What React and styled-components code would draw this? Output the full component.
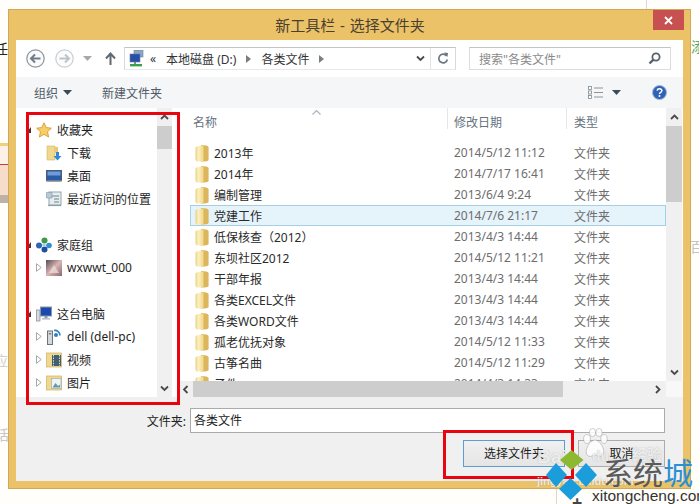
import React from "react";
import styled, { createGlobalStyle } from "styled-components";

const GlobalStyle = createGlobalStyle`
  * { box-sizing: border-box; }
  body {
    margin: 0;
    font-family: "Noto Sans", "Noto Sans CJK SC", sans-serif;
    font-size: 12px;
  }
`;

const Page = styled.div`
  position: relative;
  width: 699px;
  height: 504px;
  padding: 9px 0 0 8px;
  background: #fffefb;
  overflow: hidden;
`;

// bits of the page behind the dialog
const Scrap = styled.span`
  position: absolute;
  left: ${(p) => p.$x}px;
  top: ${(p) => p.$y}px;
  font-size: ${(p) => p.$size || 14}px;
  line-height: 1;
  font-weight: ${(p) => (p.$bold ? 700 : 400)};
  color: ${(p) => p.$color || "#222"};
`;

const LeftBand = styled.div`
  position: absolute;
  left: 0;
  top: 143px;
  width: 8px;
  height: 60px;
  background: linear-gradient(#f2cf7d 0 3px, #fdf0e4 3px 21px, #c43b3b 21px 22px, #f5dccb 22px 52px, #bdb3a5 52px);
`;

const BackLine = styled.div`
  position: absolute;
  left: ${(p) => p.$x}px;
  top: ${(p) => p.$y}px;
  width: 1px;
  height: ${(p) => p.$h}px;
  background: #d8d8d8;
`;

const Window = styled.div`
  position: relative;
  width: 683px;
  height: 480px;
  padding: 0 7px 7px;
  background: #ebc267;
  border: 1px solid #cfa95a;
  display: flex;
  flex-direction: column;
`;

const TitleBar = styled.div`
  height: 30px;
  display: grid;
  grid-template-columns: 31px 1fr 31px;
  margin-right: -1px;
`;

const Title = styled.div`
  grid-column: 2;
  text-align: center;
  font-size: 15px;
  line-height: 30px;
  word-spacing: 1px;
  color: #4a4030;
`;

const CloseButton = styled.div`
  height: 20px;
  background: #c75050;
  color: #fff;
  display: flex;
  align-items: center;
  justify-content: center;
`;

const Client = styled.div`
  flex: 1;
  display: flex;
  flex-direction: column;
  background: #f0f0f0;
  min-height: 0;
`;

const NavBar = styled.div`
  height: 37px;
  background: #fff;
  display: flex;
  align-items: center;
  padding: 0 12px 0 10px;
`;

const NavIcon = styled.div`
  width: ${(p) => p.$w}px;
  margin: 0 ${(p) => p.$mr || 0}px 0 ${(p) => p.$ml || 0}px;
  display: flex;
  justify-content: center;
`;

const AddressBar = styled.div`
  width: 332px;
  height: 23px;
  margin-right: 13px;
  display: flex;
  align-items: center;
  padding-left: 4px;
  border: 1px solid #d9d9d9;
  border-top-color: #c4c4c4;
  border-bottom-color: #e8e8e8;
  color: #333;
`;

const Crumb = styled.span`
  margin: 0 ${(p) => p.$mr || 0}px 0 ${(p) => p.$ml || 0}px;
  white-space: nowrap;
`;

const AddressEnd = styled.div`
  margin-left: auto;
  height: 100%;
  display: flex;
  align-items: center;
`;

const RefreshBox = styled.div`
  width: 25px;
  height: 100%;
  display: flex;
  align-items: center;
  justify-content: center;
  border-left: 1px solid #e3e3e3;
  margin-left: 5px;
`;

const SearchBox = styled.div`
  width: 202px;
  height: 23px;
  display: flex;
  align-items: center;
  justify-content: space-between;
  padding: 0 9px;
  border: 1px solid #dcdcdc;
  border-top-color: #c4c4c4;
  color: #8a8a8a;
`;

const Toolbar = styled.div`
  height: 31px;
  display: flex;
  align-items: center;
  padding: 0 16px 0 18px;
  background: #f5f6f7;
  color: #4f5b68;
`;

const ToolLabel = styled.span`
  margin: 0 ${(p) => p.$mr || 0}px 0 ${(p) => p.$ml || 0}px;
`;

const ToolSpacer = styled.div`
  flex: 1;
`;

const Main = styled.div`
  height: 289px;
  display: flex;
  background: #fff;
`;

const TreePane = styled.div`
  width: 141px;
  padding-top: 10px;
  overflow: hidden;
`;

const TreeRow = styled.div`
  height: 23px;
  display: flex;
  align-items: center;
  padding-left: ${(p) => (p.$level ? 20 : 10)}px;
  color: #1e1e1e;
  white-space: nowrap;
`;

const Expander = styled.div`
  width: 10px;
  height: 100%;
  display: flex;
  align-items: center;
`;

const TreeIcon = styled.div`
  width: 16px;
  height: 16px;
  margin-right: 5px;
`;

const VScroll = styled.div`
  width: ${(p) => p.$w}px;
  margin-right: ${(p) => p.$mr || 0}px;
  background: #f0f0f0;
  display: flex;
  flex-direction: column;
  align-items: center;
`;

const ArrowBox = styled.div`
  height: 18px;
  width: 100%;
  display: flex;
  align-items: center;
  justify-content: center;
  flex: none;
`;

const VThumb = styled.div`
  width: 100%;
  height: ${(p) => p.$h}px;
  background: #cdcdcd;
  flex: none;
`;

const VFill = styled.div`
  flex: 1;
`;

const Splitter = styled.div`
  width: 8px;
`;

const ListPane = styled.div`
  width: 503px;
  display: flex;
  flex-direction: column;
`;

const ListTop = styled.div`
  flex: 1;
  min-height: 0;
  display: flex;
`;

const Rows = styled.div`
  flex: 1;
  margin-left: 10px;
  overflow: hidden;
`;

const columns = "258px 119px 99px";

const Header = styled.div`
  position: relative;
  height: 34px;
  display: grid;
  grid-template-columns: ${columns};
  color: #66727e;
`;

const HeadCell = styled.div`
  height: 21px;
  padding: 6px 0 0 ${(p) => p.$pl}px;
  border-right: ${(p) => (p.$line ? "1px solid #e6e6e6" : "0")};
  line-height: 18px;
`;

const SortMark = styled.div`
  position: absolute;
  left: 122px;
  top: 2px;
  line-height: 0;
`;

const Row = styled.div`
  height: 21px;
  display: grid;
  grid-template-columns: ${columns};
  align-items: center;
  color: #6d6d6d;
  background: ${(p) => (p.$selected ? "#e5f3fb" : "transparent")};
  box-shadow: ${(p) => (p.$selected ? "inset 0 0 0 1px #a5cfe3" : "none")};
`;

const NameCell = styled.div`
  display: flex;
  align-items: center;
  gap: 5px;
  padding-left: 5px;
  color: #2a2a2a;
  white-space: nowrap;
`;

const DateCell = styled.div`
  padding-left: 6px;
  white-space: nowrap;
`;

const TypeCell = styled.div`
  padding-left: 7px;
`;

const HScrollRow = styled.div`
  height: 16px;
  display: flex;
`;

const HScroll = styled.div`
  flex: 1;
  display: flex;
  align-items: stretch;
  background: #f0f0f0;
`;

const HArrow = styled.div`
  width: 13px;
  display: flex;
  align-items: center;
  justify-content: center;
`;

const HThumb = styled.div`
  width: 370px;
  background: #cdcdcd;
`;

const HFill = styled.div`
  flex: 1;
  display: flex;
  align-items: center;
  justify-content: flex-end;
  padding-right: 4px;
`;

const Corner = styled.div`
  width: 17px;
  background: #f8f8f8;
`;

const Footer = styled.div`
  flex: 1;
  padding: 11px 18px 0 0;
  display: flex;
  flex-direction: column;
  gap: 7px;
`;

const FieldRow = styled.div`
  display: flex;
  align-items: center;
  justify-content: flex-end;
  gap: 4px;
  color: #222;
`;

const FolderInput = styled.div`
  width: 475px;
  height: 25px;
  padding: 0 3px;
  line-height: 23px;
  background: #fff;
  border: 1px solid #ababab;
  color: #222;
`;

const ButtonRow = styled.div`
  display: flex;
  justify-content: flex-end;
  gap: 13px;
`;

const Button = styled.div`
  width: ${(p) => p.$w}px;
  height: 27px;
  line-height: 25px;
  text-align: center;
  color: #222;
  background: linear-gradient(#f0f0f0, #e5e5e5);
  border: 1px solid ${(p) => (p.$primary ? "#5b9ed6" : "#acacac")};
`;

const RedBox = styled.div`
  position: absolute;
  left: ${(p) => p.$x}px;
  top: ${(p) => p.$y}px;
  width: ${(p) => p.$w}px;
  height: ${(p) => p.$h}px;
  border: 3px solid #e8050f;
`;

const LogoMark = styled.svg`
  position: absolute;
  left: 544px;
  top: 448px;
`;

const PawMark = styled.svg`
  position: absolute;
  left: 582px;
  top: 428px;
`;

const FaintMark = styled.span`
  position: absolute;
  left: ${(p) => p.$x}px;
  top: ${(p) => p.$y}px;
  font-family: "Liberation Sans", "Noto Sans CJK SC", sans-serif;
  font-size: ${(p) => p.$size}px;
  font-weight: 700;
  line-height: 1;
  color: rgba(255, 255, 255, 0.8);
  text-shadow: 0 0 1px rgba(110, 110, 110, 0.55);
  white-space: nowrap;
`;

const BrandName = styled.div`
  position: absolute;
  left: 603px;
  top: 456px;
  font-family: "Noto Sans CJK SC", sans-serif;
  font-size: 30px;
  line-height: 30px;
  color: #5a5a5a;
  white-space: nowrap;
`;

const BrandAccent = styled.span`
  color: #2b8fd2;
`;

const BrandUrl = styled.div`
  position: absolute;
  left: 592px;
  top: 487px;
  font-family: "Liberation Sans", sans-serif;
  font-size: 15.5px;
  line-height: 17px;
  color: #333;
  white-space: nowrap;
`;

const Chevron = ({ dir = "up" }) => {
  const d = {
    up: "M1 5 L4.5 1.5 L8 5",
    down: "M1 1.5 L4.5 5 L8 1.5",
    left: "M5.5 1 L2 4.5 L5.5 8",
    right: "M3 1 L6.5 4.5 L3 8",
  }[dir];
  const vertical = dir === "up" || dir === "down";
  return (
    <svg width="9" height={vertical ? 7 : 9} viewBox={vertical ? "0 0 9 7" : "0 0 9 9"}>
      <path d={d} fill="none" stroke="#4a4a4a" strokeWidth="1.8" />
    </svg>
  );
};

const Caret = ({ color = "#3c4a5a" }) => (
  <svg width="9" height="5" viewBox="0 0 9 5">
    <path d="M0 0 H9 L4.5 5 Z" fill={color} />
  </svg>
);

const CrumbArrow = () => (
  <svg width="5" height="8" viewBox="0 0 5 8">
    <path d="M0 0 L5 4 L0 8 Z" fill="#7d7d7d" />
  </svg>
);

const RoundArrow = ({ dir, faded }) => (
  <svg width="19" height="19" viewBox="0 0 19 19" opacity={faded ? 0.45 : 1}>
    <circle cx="9.5" cy="9.5" r="8.7" fill="#fafafa" stroke="#8b939b" strokeWidth="1.2" />
    <path
      d={dir === "left" ? "M14.5 9.5 H5.5 M9 5.5 L5 9.5 L9 13.5" : "M4.5 9.5 H13.5 M10 5.5 L14 9.5 L10 13.5"}
      fill="none"
      stroke="#6f7c89"
      strokeWidth="2"
    />
  </svg>
);

const UpArrow = () => (
  <svg width="11" height="13" viewBox="0 0 11 13">
    <path d="M5.5 13 V2 M1 6.5 L5.5 1.5 L10 6.5" fill="none" stroke="#5f6973" strokeWidth="2" />
  </svg>
);

const NetworkIcon = () => (
  <svg width="15" height="17" viewBox="0 0 15 17">
    <rect x="5" y="0" width="9" height="7" fill="#8ea6c4" stroke="#6b7f99" strokeWidth="0.6" />
    <rect x="1" y="4" width="10" height="8" fill="#2450a8" stroke="#6b7f99" strokeWidth="0.6" />
    <rect x="5" y="12" width="2" height="2" fill="#888" />
    <rect x="1" y="14" width="12" height="2.4" fill="#3aa24a" />
  </svg>
);

const RefreshIcon = () => (
  <svg width="12" height="13" viewBox="0 0 12 13">
    <path d="M9.6 4 A4.3 4.3 0 1 0 10.3 7.5" fill="none" stroke="#6a7683" strokeWidth="1.7" />
    <path d="M7 0.5 L11 1 L10.4 5 Z" fill="#6a7683" />
  </svg>
);

const SearchIcon = () => (
  <svg width="13" height="13" viewBox="0 0 13 13">
    <circle cx="8" cy="5" r="3.6" fill="none" stroke="#59636d" strokeWidth="1.8" />
    <path d="M5.4 7.6 L1.5 11.5" stroke="#59636d" strokeWidth="2.4" />
  </svg>
);

const ViewIcon = () => (
  <svg width="15" height="13" viewBox="0 0 15 13">
    <g fill="#fff" stroke="#7e8791" strokeWidth="0.8">
      <rect x="0.5" y="0.5" width="3" height="3" />
      <rect x="0.5" y="5" width="3" height="3" />
      <rect x="0.5" y="9.5" width="3" height="3" />
    </g>
    <path d="M6 2 H15 M6 6.5 H15 M6 11 H15" stroke="#8b949d" strokeWidth="1" />
  </svg>
);

const HelpIcon = () => (
  <svg width="15" height="15" viewBox="0 0 15 15">
    <circle cx="7.5" cy="7.5" r="7" fill="#2f62b4" stroke="#9db6da" strokeWidth="1" />
    <path d="M5.2 5.6 C5.4 3.2 10 3.2 9.9 5.7 C9.8 7.3 7.6 7.3 7.5 9" fill="none" stroke="#fff" strokeWidth="1.5" />
    <circle cx="7.5" cy="11" r="1" fill="#fff" />
  </svg>
);

const SolidExpander = () => (
  <svg width="5" height="6" viewBox="0 0 5 6">
    <path d="M5 0 V6 H0 Z" fill="#3a3a3a" />
  </svg>
);

const OpenExpander = () => (
  <svg width="6" height="9" viewBox="0 0 6 9">
    <path d="M0.5 0.7 L5.2 4.5 L0.5 8.3 Z" fill="#fff" stroke="#a6a6a6" />
  </svg>
);

const FolderIcon = () => (
  <svg width="14" height="18" viewBox="0 0 14 18">
    <defs>
      <linearGradient id="folderFace" x1="0" y1="0" x2="1" y2="0">
        <stop offset="0" stopColor="#e9cf82" />
        <stop offset="0.35" stopColor="#fbf0bf" />
        <stop offset="1" stopColor="#f0d788" />
      </linearGradient>
    </defs>
    <path d="M6 1 Q13 1 13.6 3 V16 Q13 17.5 6 17.5 Z" fill="#dcb65c" />
    <path d="M0.5 4 Q0.5 2.2 2.5 2.2 L8.5 1.5 V17.5 H2.5 Q0.5 17.5 0.5 15.5 Z" fill="url(#folderFace)" />
  </svg>
);

const StarIcon = () => (
  <svg width="16" height="16" viewBox="0 0 16 16">
    <path
      d="M8 0.8 L10.2 5.6 L15.4 6.2 L11.5 9.7 L12.6 15 L8 12.3 L3.4 15 L4.5 9.7 L0.6 6.2 L5.8 5.6 Z"
      fill="#f7ce66"
      stroke="#d99a2e"
      strokeWidth="0.9"
    />
  </svg>
);

const DownloadIcon = () => (
  <svg width="16" height="16" viewBox="0 0 16 16">
    <path d="M1 1 H9 V15 H1 Z" fill="#f0d98c" stroke="#d2b565" strokeWidth="0.6" />
    <path d="M9 2 H12 V8 H9 Z" fill="#e6c878" />
    <path d="M10 7 H13 V11 H15.5 L11.5 15.5 L7.5 11 H10 Z" fill="#2f8ad6" />
  </svg>
);

const DesktopIcon = () => (
  <svg width="16" height="16" viewBox="0 0 16 16">
    <rect x="0.5" y="2.5" width="15" height="10" fill="#2b5aa6" stroke="#4a5a70" />
    <rect x="1.5" y="3.5" width="13" height="4" fill="#6f9bd8" />
    <rect x="0.5" y="12.5" width="15" height="1.5" fill="#9aa4b0" />
  </svg>
);

const RecentIcon = () => (
  <svg width="16" height="16" viewBox="0 0 16 16">
    <rect x="3" y="1" width="12" height="13" fill="#e6edf0" stroke="#93a4ad" />
    <path d="M0.5 1.5 H6 V7 H0.5 Z" fill="#b8cbd4" stroke="#7f98a5" strokeWidth="0.6" />
    <path d="M6 5 H13 M8 8 H13 M8 11 H13" stroke="#6f8590" strokeWidth="1.2" />
    <path d="M2 14.5 H15" stroke="#8aa0ab" strokeWidth="1.2" />
  </svg>
);

const HomeGroupIcon = () => (
  <svg width="16" height="16" viewBox="0 0 16 16">
    <circle cx="8.5" cy="3.6" r="3" fill="#3f9a46" />
    <circle cx="3" cy="8.5" r="3" fill="#2f63b4" />
    <circle cx="13" cy="8.5" r="2.8" fill="#2f8fd0" />
    <circle cx="8.5" cy="12.5" r="3" fill="#1e4f9e" />
    <circle cx="8" cy="8" r="1.8" fill="#a8c9e8" />
  </svg>
);

const ThumbIcon = () => (
  <svg width="16" height="16" viewBox="0 0 16 16">
    <defs>
      <linearGradient id="thumbFill" x1="0" y1="0" x2="1" y2="1">
        <stop offset="0" stopColor="#5b4a52" />
        <stop offset="0.5" stopColor="#d8b6b4" />
        <stop offset="1" stopColor="#8c6670" />
      </linearGradient>
    </defs>
    <rect width="16" height="16" fill="url(#thumbFill)" />
    <path d="M3 13 L8 5 L13 13 Z" fill="#efe0dc" opacity="0.7" />
  </svg>
);

const ComputerIcon = () => (
  <svg width="16" height="16" viewBox="0 0 16 16">
    <rect x="0.5" y="4" width="3.5" height="11" fill="#d5dbe0" stroke="#7d8891" strokeWidth="0.7" />
    <rect x="4.5" y="1" width="11" height="9" fill="#1c49b0" stroke="#8c97a3" />
    <rect x="8.5" y="10" width="3" height="2" fill="#8c97a3" />
    <rect x="6" y="12" width="8" height="1.6" fill="#b9c2ca" />
  </svg>
);

const NetworkPcIcon = () => (
  <svg width="16" height="16" viewBox="0 0 16 16">
    <rect x="1.5" y="2" width="5" height="13.5" fill="#d4d9dd" stroke="#6c7379" />
    <rect x="2.8" y="4" width="2.4" height="1.4" fill="#70787f" />
    <path d="M8 1.5 A5 5 0 0 1 14 6.5" fill="none" stroke="#2e7fc4" strokeWidth="1.6" />
    <circle cx="10" cy="6" r="2" fill="#2e7fc4" />
  </svg>
);

const VideoIcon = () => (
  <svg width="16" height="16" viewBox="0 0 16 16">
    <rect x="0.5" y="1" width="15" height="14" fill="#f0d98c" stroke="#cfb163" strokeWidth="0.7" />
    <rect x="6" y="3" width="9" height="11" fill="#44606e" />
    <path d="M7.5 3 V14 M13.5 3 V14" stroke="#d9e3e8" strokeWidth="1" strokeDasharray="1.4 1.2" />
  </svg>
);

const PictureIcon = () => (
  <svg width="16" height="16" viewBox="0 0 16 16">
    <rect x="0.5" y="1" width="15" height="14" fill="#f0d98c" stroke="#cfb163" strokeWidth="0.7" />
    <rect x="5.5" y="3.5" width="9.5" height="10" fill="#eef3f4" stroke="#9fb0b6" strokeWidth="0.7" />
    <path d="M6.5 12.5 L9.5 8 L12 11 L14 9.5 V12.5 Z" fill="#5f9aa8" />
  </svg>
);

const treeItems = [
  { label: "收藏夹", icon: <StarIcon />, root: true },
  { label: "下载", icon: <DownloadIcon /> },
  { label: "桌面", icon: <DesktopIcon /> },
  { label: "最近访问的位置", icon: <RecentIcon /> },
  null,
  { label: "家庭组", icon: <HomeGroupIcon />, root: true },
  { label: "wxwwt_000", icon: <ThumbIcon />, open: true },
  null,
  { label: "这台电脑", icon: <ComputerIcon />, root: true },
  { label: "dell (dell-pc)", icon: <NetworkPcIcon />, open: true },
  { label: "视频", icon: <VideoIcon />, open: true },
  { label: "图片", icon: <PictureIcon />, open: true },
];

const files = [
  ["2013年", "2014/5/12 11:12"],
  ["2014年", "2014/7/17 16:41"],
  ["编制管理", "2013/6/4 9:24"],
  ["党建工作", "2014/7/6 21:17"],
  ["低保核查（2012）", "2013/4/3 14:44"],
  ["东坝社区2012", "2014/5/12 11:21"],
  ["干部年报", "2013/4/3 14:44"],
  ["各类EXCEL文件", "2013/4/3 14:44"],
  ["各类WORD文件", "2013/4/3 14:44"],
  ["孤老优抚对象", "2014/5/12 11:33"],
  ["古筝名曲", "2014/5/12 11:29"],
  ["子件", "2014/4/3 14:33"],
];

function App() {
  return (
    <Page>
      <GlobalStyle />
      <Scrap $x={-6} $y={42}>任</Scrap>
      <Scrap $x={-8} $y={62} $bold>】</Scrap>
      <LeftBand />
      <Scrap $x={-5} $y={428} $color="#c8c8c8">话</Scrap>
      <Scrap $x={-6} $y={354} $color="#d0d0d0">应</Scrap>
      <BackLine $x={646} $y={0} $h={9} />
      <BackLine $x={556} $y={489} $h={15} />
      <Scrap $x={691} $y={40} $color="#58a76a">添</Scrap>
      <Scrap $x={690} $y={240} $color="#c4c4c4">百</Scrap>

      <Window>
        <TitleBar>
          <Title>新工具栏 - 选择文件夹</Title>
          <CloseButton>
            <svg width="9" height="9" viewBox="0 0 9 9">
              <path d="M1 1 L8 8 M8 1 L1 8" stroke="#fff" strokeWidth="1.8" />
            </svg>
          </CloseButton>
        </TitleBar>
        <Client>
          <NavBar>
            <NavIcon $w={19} $mr={10}><RoundArrow dir="left" /></NavIcon>
            <NavIcon $w={19} $mr={9}><RoundArrow dir="right" faded /></NavIcon>
            <NavIcon $w={9} $mr={13}><Caret color="#a8a8a8" /></NavIcon>
            <NavIcon $w={11} $mr={8}><UpArrow /></NavIcon>
            <AddressBar>
              <NetworkIcon />
              <Crumb $ml={6} $mr={10}>«</Crumb>
              <Crumb>本地磁盘 (D:)</Crumb>
              <Crumb $ml={10} $mr={10}><CrumbArrow /></Crumb>
              <Crumb>各类文件</Crumb>
              <Crumb $ml={10}><CrumbArrow /></Crumb>
              <AddressEnd>
                <Chevron dir="down" />
                <RefreshBox><RefreshIcon /></RefreshBox>
              </AddressEnd>
            </AddressBar>
            <SearchBox>
              <span>搜索"各类文件"</span>
              <SearchIcon />
            </SearchBox>
          </NavBar>

          <Toolbar>
            <ToolLabel $mr={5}>组织</ToolLabel>
            <Caret />
            <ToolLabel $ml={30}>新建文件夹</ToolLabel>
            <ToolSpacer />
            <ViewIcon />
            <NavIcon $w={9} $ml={9} $mr={31}><Caret /></NavIcon>
            <HelpIcon />
          </Toolbar>

          <Main>
            <TreePane>
              {treeItems.map((item, i) =>
                item ? (
                  <TreeRow key={i} $level={item.root ? 0 : 1}>
                    <Expander>
                      {item.root && <SolidExpander />}
                      {item.open && <OpenExpander />}
                    </Expander>
                    <TreeIcon>{item.icon}</TreeIcon>
                    {item.label}
                  </TreeRow>
                ) : (
                  <TreeRow key={i} />
                )
              )}
            </TreePane>
            <VScroll $w={15}>
              <ArrowBox><Chevron dir="up" /></ArrowBox>
              <VThumb $h={23} />
              <VFill />
              <ArrowBox><Chevron dir="down" /></ArrowBox>
            </VScroll>
            <Splitter />
            <ListPane>
              <ListTop>
                <Rows>
                  <Header>
                    <HeadCell $pl={3} $line>名称</HeadCell>
                    <HeadCell $pl={6} $line>修改日期</HeadCell>
                    <HeadCell $pl={7}>类型</HeadCell>
                    <SortMark>
                      <svg width="9" height="5" viewBox="0 0 9 5">
                        <path d="M0.5 4.5 L4.5 0.5 L8.5 4.5" fill="none" stroke="#a9b7c4" strokeWidth="1.2" />
                      </svg>
                    </SortMark>
                  </Header>
                  {files.map(([name, date], i) => (
                    <Row key={name} $selected={i === 3}>
                      <NameCell><FolderIcon />{name}</NameCell>
                      <DateCell>{date}</DateCell>
                      <TypeCell>文件夹</TypeCell>
                    </Row>
                  ))}
                </Rows>
                <VScroll $w={16} $mr={1}>
                  <ArrowBox><Chevron dir="up" /></ArrowBox>
                  <VThumb $h={76} />
                  <VFill />
                  <ArrowBox><Chevron dir="down" /></ArrowBox>
                </VScroll>
              </ListTop>
              <HScrollRow>
                <HScroll>
                  <HArrow><Chevron dir="left" /></HArrow>
                  <HThumb />
                  <HFill><Chevron dir="right" /></HFill>
                </HScroll>
                <Corner />
              </HScrollRow>
            </ListPane>
          </Main>

          <Footer>
            <FieldRow>
              <span>文件夹:</span>
              <FolderInput>各类文件</FolderInput>
            </FieldRow>
            <ButtonRow>
              <Button $w={102} $primary>选择文件夹</Button>
              <Button $w={87}>取消</Button>
            </ButtonRow>
          </Footer>
        </Client>
      </Window>

      <RedBox $x={26} $y={112} $w={154} $h={293} />
      <RedBox $x={443} $y={430} $w={131} $h={49} />

      <PawMark width="26" height="34" viewBox="0 0 26 34">
        <g fill="rgba(255,255,255,0.85)" stroke="rgba(120,120,120,0.45)" strokeWidth="0.8">
          <ellipse cx="5" cy="11" rx="3.4" ry="4.4" />
          <ellipse cx="10.5" cy="4.5" rx="3.2" ry="4" />
          <ellipse cx="17" cy="4.5" rx="3.2" ry="4" />
          <ellipse cx="22" cy="11" rx="3.2" ry="4.4" />
          <path d="M13 12 C18 12 24 22 21 27 C18 30 15 27 13 27 C11 27 8 30 5 27 C2 22 8 12 13 12 Z" />
        </g>
      </PawMark>
      <FaintMark $x={537} $y={447} $size={19}>Bai</FaintMark>
      <FaintMark $x={592} $y={449} $size={14}>du</FaintMark>
      <FaintMark $x={632} $y={447} $size={15}>经验</FaintMark>
      <FaintMark $x={537} $y={476} $size={11}>jingyan.baidu.com</FaintMark>
      <LogoMark width="54" height="54" viewBox="0 0 54 54">
        <path d="M27.5 2 L39.5 12 L27.5 22 L16 12 Z" fill="#8cb832" />
        <path d="M12 15 L23 27 L12 39 L2 27 Z" fill="#1b9ddb" />
        <path d="M42 15 L53 27 L42 39 L31 27 Z" fill="#1b9ddb" />
        <path d="M26.5 30 L38 41 L26.5 52 L15 41 Z" fill="#1b9ddb" />
      </LogoMark>
      <BrandName>系统<BrandAccent>城</BrandAccent></BrandName>
      <BrandUrl>xitongcheng.com</BrandUrl>
      <Scrap $x={572} $y={493} $size={18} $bold $color="#444">+</Scrap>
    </Page>
  );
}

export default App;
